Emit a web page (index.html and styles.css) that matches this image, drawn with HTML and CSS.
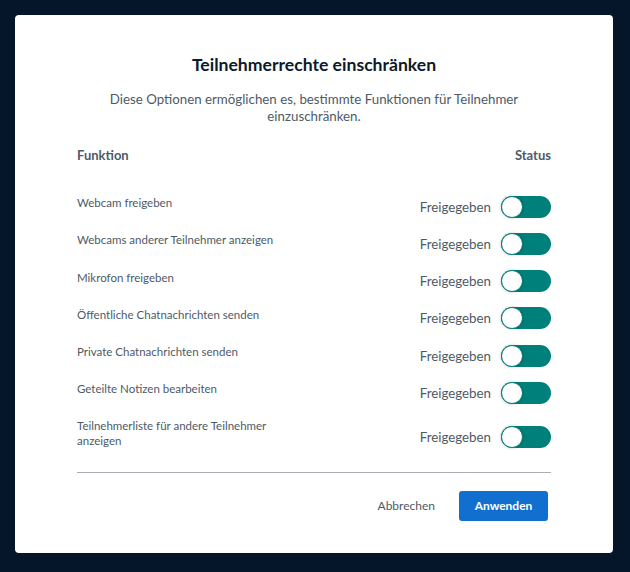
FILE: index.html
```html
<!DOCTYPE html>
<html lang="de">
<head>
<meta charset="utf-8">
<link rel="stylesheet" href="styles.css">
</head>
<body>
<div class="modal">
  <h2 class="title">Teilnehmerrechte einschränken</h2>
  <p class="desc">Diese Optionen ermöglichen es, bestimmte Funktionen für Teilnehmer einzuschränken.</p>
  <div class="head">
    <span>Funktion</span>
    <span>Status</span>
  </div>
  <div class="rows">
    <div class="row"><span class="label">Webcam freigeben</span><span class="status">Freigegeben<span class="toggle"><span class="knob"></span></span></span></div>
    <div class="row"><span class="label">Webcams anderer Teilnehmer anzeigen</span><span class="status">Freigegeben<span class="toggle"><span class="knob"></span></span></span></div>
    <div class="row"><span class="label">Mikrofon freigeben</span><span class="status">Freigegeben<span class="toggle"><span class="knob"></span></span></span></div>
    <div class="row"><span class="label">Öffentliche Chatnachrichten senden</span><span class="status">Freigegeben<span class="toggle"><span class="knob"></span></span></span></div>
    <div class="row"><span class="label">Private Chatnachrichten senden</span><span class="status">Freigegeben<span class="toggle"><span class="knob"></span></span></span></div>
    <div class="row"><span class="label">Geteilte Notizen bearbeiten</span><span class="status">Freigegeben<span class="toggle"><span class="knob"></span></span></span></div>
    <div class="row"><span class="label label-wrap">Teilnehmerliste für andere Teilnehmer anzeigen</span><span class="status">Freigegeben<span class="toggle"><span class="knob"></span></span></span></div>
  </div>
  <div class="footer">
    <button class="btn btn-cancel">Abbrechen</button>
    <button class="btn btn-apply">Anwenden</button>
  </div>
</div>
</body>
</html>
```
FILE: styles.css
```css
html, body {
  margin: 0;
  padding: 0;
}
body {
  background: #06162a;
  width: 630px;
  height: 572px;
  overflow: hidden;
  font-family: Lato, "Open Sans", sans-serif;
  color: #4e5a66;
}
.modal {
  box-sizing: border-box;
  margin: 15px 0 0 15px;
  width: 598px;
  height: 538px;
  background: #fff;
  border-radius: 4px;
  padding: 38px 62px 0 62px;
  display: flex;
  flex-direction: column;
}
.title {
  margin: 0;
  font-size: 17.6px;
  line-height: 24px;
  font-weight: 700;
  color: #0c1a2b;
  text-align: center;
}
.desc {
  margin: 14px 20px 0 20px;
  font-size: 13.3px;
  line-height: 17px;
  text-align: center;
  color: #4e5a66;
}
.head {
  margin-top: 20px;
  display: flex;
  justify-content: space-between;
  font-size: 13px;
  line-height: 20px;
  font-weight: 700;
  color: #4e5a66;
}
.rows {
  margin-top: 23.2px;
  display: flex;
  flex-direction: column;
}
.row {
  display: flex;
  justify-content: space-between;
  align-items: center;
  padding: 7.1px 0;
}
.label {
  font-size: 11.5px;
  line-height: 15px;
  padding-bottom: 8px;
  color: #4e5a66;
}
.label-wrap {
  width: 215px;
}
.status {
  display: flex;
  align-items: center;
  gap: 10px;
  font-size: 13.3px;
  line-height: 22px;
  color: #4e5a66;
}
.toggle {
  position: relative;
  display: block;
  width: 50px;
  height: 22px;
  border-radius: 11px;
  background: #00807b;
}
.knob {
  position: absolute;
  left: 0;
  top: 0;
  box-sizing: border-box;
  width: 22px;
  height: 22px;
  border-radius: 50%;
  background: #fff;
  border: 1.5px solid #00807b;
  box-shadow: 0 0 3px rgba(0, 0, 0, 0.25);
}
.footer {
  margin-top: 8px;
  border-top: 1px solid #a7adb3;
  padding-top: 18px;
  display: flex;
  justify-content: flex-end;
  align-items: center;
  gap: 12px;
  padding-right: 3px;
}
.btn {
  font-family: inherit;
  border: none;
  height: 30px;
  font-size: 12px;
  border-radius: 3px;
  cursor: pointer;
}
.btn-cancel {
  background: transparent;
  color: #4e5a66;
  padding: 0 12px;
}
.btn-apply {
  background: #1170cf;
  color: #fff;
  font-weight: 700;
  width: 89px;
  padding: 0;
}
```
